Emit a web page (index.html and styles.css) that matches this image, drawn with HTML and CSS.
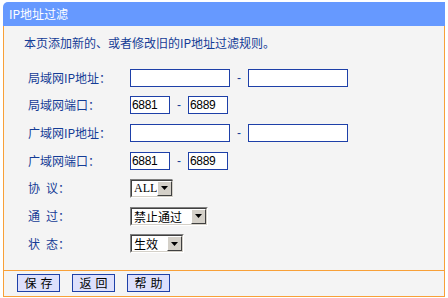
FILE: index.html
```html
<!DOCTYPE html>
<html lang="zh-CN">
<head>
<meta charset="utf-8">
<title>IP地址过滤</title>
<link rel="stylesheet" href="styles.css">
</head>
<body>
<div class="panel">
  <div class="head">IP地址过滤</div>
  <div class="body">
    <div class="content">
      <div class="desc">本页添加新的、或者修改旧的IP地址过滤规则。</div>
      <div class="rows">
        <div class="row">
          <span class="label">局域网IP地址：</span>
          <input class="txt w100" type="text" value="">
          <span class="dash">-</span>
          <input class="txt w100" type="text" value="">
        </div>
        <div class="row">
          <span class="label">局域网端口：</span>
          <input class="txt w40" type="text" value="6881">
          <span class="dash">-</span>
          <input class="txt w40" type="text" value="6889">
        </div>
        <div class="row">
          <span class="label">广域网IP地址：</span>
          <input class="txt w100" type="text" value="">
          <span class="dash">-</span>
          <input class="txt w100" type="text" value="">
        </div>
        <div class="row">
          <span class="label">广域网端口：</span>
          <input class="txt w40" type="text" value="6881">
          <span class="dash">-</span>
          <input class="txt w40" type="text" value="6889">
        </div>
        <div class="row">
          <span class="label">协<span class="sp"></span>议：</span>
          <span class="sel s43"><span class="sel-in"><span class="val latin">ALL</span><span class="arrow"><svg width="7" height="4" viewBox="0 0 7 4"><polygon points="0,0 7,0 3.5,4" fill="#000"/></svg></span></span></span>
        </div>
        <div class="row">
          <span class="label">通<span class="sp"></span>过：</span>
          <span class="sel s78"><span class="sel-in"><span class="val">禁止通过</span><span class="arrow"><svg width="7" height="4" viewBox="0 0 7 4"><polygon points="0,0 7,0 3.5,4" fill="#000"/></svg></span></span></span>
        </div>
        <div class="row">
          <span class="label">状<span class="sp"></span>态：</span>
          <span class="sel s54"><span class="sel-in"><span class="val">生效</span><span class="arrow"><svg width="7" height="4" viewBox="0 0 7 4"><polygon points="0,0 7,0 3.5,4" fill="#000"/></svg></span></span></span>
        </div>
      </div>
    </div>
    <div class="bar">
      <button class="bt" type="button">保存</button>
      <button class="bt" type="button">返回</button>
      <button class="bt" type="button">帮助</button>
    </div>
  </div>
</div>
</body>
</html>
```
FILE: styles.css
```css
* { box-sizing: border-box; }
body {
  margin: 0;
  background: #fff;
  font-family: "Noto Sans CJK SC", "Liberation Sans", sans-serif;
  font-size: 12px;
}
.panel {
  margin: 2px 0 0 3px;
  width: 442px;
}
.head {
  height: 24px;
  background: #6699ff;
  border-top-left-radius: 5px;
  color: #fff;
  line-height: 24px;
  padding-left: 6px;
}
.body {
  background: #f4f4f4;
  border: 1px solid #f8a038;
  border-top: 0;
}
.content {
  height: 244px;
  padding: 4px 0 0 20px;
}
.desc {
  height: 26px;
  line-height: 26px;
  color: #143c96;
}
.rows {
  margin: 8px 0 0 4px;
  display: flex;
  flex-direction: column;
}
.row {
  height: 27.67px;
  display: flex;
  align-items: center;
}
.label {
  width: 102px;
  color: #143c96;
  line-height: 14px;
  white-space: nowrap;
}
.sp {
  display: inline-block;
  width: 6px;
}
.txt {
  height: 18px;
  margin: 0;
  padding: 0 1px;
  border: 1px solid #1e40a8;
  background: #fff;
  color: #000;
  font-family: "Liberation Sans", sans-serif;
  font-size: 12px;
  letter-spacing: -0.3px;
  outline: none;
}
.w100 { width: 100px; }
.w40 { width: 40px; }
.dash {
  width: 18px;
  text-align: center;
  color: #143c96;
  font-family: "Liberation Sans", sans-serif;
  font-size: 12px;
}
.sel {
  display: inline-flex;
  height: 19px;
  border: 1px solid;
  border-color: #808080 #ffffff #ffffff #808080;
}
.s43 { width: 43px; }
.s78 { width: 78px; }
.s54 { width: 54px; }
.sel-in {
  flex: 1;
  display: flex;
  align-items: center;
  border: 1px solid;
  border-color: #404040 #d4d0c8 #d4d0c8 #404040;
  background: #fff;
}
.val {
  flex: 1;
  padding-left: 2px;
  color: #000;
  line-height: 15px;
  white-space: nowrap;
  overflow: hidden;
}
.latin {
  font-family: "Liberation Serif", serif;
  font-size: 12px;
}
.arrow {
  width: 15px;
  height: 15px;
  background: #d4d0c8;
  border: 1px solid;
  border-color: #ffffff #404040 #404040 #ffffff;
  display: flex;
  align-items: center;
  justify-content: center;
}
.arrow svg { display: block; }
.bar {
  border-top: 1px solid #f8a038;
  height: 26px;
  padding: 3px 0 0 13px;
  display: flex;
  gap: 12px;
}
.bt {
  width: 43px;
  height: 18px;
  margin: 0;
  padding: 0 0 0 4px;
  border: 1px solid #1e40a8;
  background: #dde0fc;
  color: #000;
  font-family: "Noto Sans CJK SC", sans-serif;
  font-size: 12px;
  letter-spacing: 4px;
  line-height: 16px;
}
```
